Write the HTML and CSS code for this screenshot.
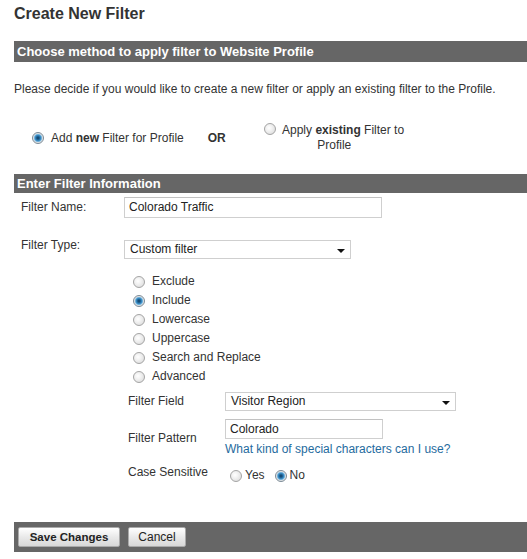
FILE: index.html
```
<!DOCTYPE html>
<html>
<head>
<meta charset="utf-8">
<link rel="stylesheet" href="styles.css">
</head>
<body>
<div class="page">
  <h1 class="title">Create New Filter</h1>
  <div class="bar bar-method">Choose method to apply filter to Website Profile</div>
  <p class="intro">Please decide if you would like to create a new filter or apply an existing filter to the Profile.</p>
  <div class="method">
    <label class="opt opt-new"><span class="radio on"></span><span>Add <b>new</b> Filter for Profile</span></label>
    <span class="or">OR</span>
    <label class="opt opt-existing"><span class="radio"></span> <span>Apply <b>existing</b> Filter to</span><br><span>Profile</span></label>
  </div>
  <div class="bar bar-info">Enter Filter Information</div>
  <div class="form">
    <div class="row row-name">
      <span class="label">Filter Name:</span>
      <span class="input input-name">Colorado Traffic</span>
    </div>
    <div class="row row-type">
      <span class="label">Filter Type:</span>
      <div class="type-ctl">
        <div class="select select-type"><span>Custom filter</span><span class="caret"></span></div>
        <ul class="radio-list">
          <li><span class="radio"></span>Exclude</li>
          <li><span class="radio on"></span>Include</li>
          <li><span class="radio"></span>Lowercase</li>
          <li><span class="radio"></span>Uppercase</li>
          <li><span class="radio"></span>Search and Replace</li>
          <li><span class="radio"></span>Advanced</li>
        </ul>
        <div class="sub">
          <div class="sub-row sub-field">
            <span class="sub-label">Filter Field</span>
            <div class="select select-field"><span>Visitor Region</span><span class="caret"></span></div>
          </div>
          <div class="sub-row sub-pattern">
            <span class="sub-label">Filter Pattern</span>
            <div class="pattern-ctl">
              <span class="input input-pattern">Colorado</span>
              <a class="help" href="#">What kind of special characters can I use?</a>
            </div>
          </div>
          <div class="sub-row sub-case">
            <span class="sub-label">Case Sensitive</span>
            <div class="case-ctl">
              <span class="radio"></span><span class="case-text">Yes</span>
              <span class="radio on"></span><span class="case-text">No</span>
            </div>
          </div>
        </div>
      </div>
    </div>
  </div>
  <div class="footer">
    <button class="btn btn-save">Save Changes</button>
    <button class="btn btn-cancel">Cancel</button>
  </div>
</div>
</body>
</html>
```
FILE: styles.css
```
html, body {
  margin: 0;
  padding: 0;
  background: #fff;
}
body {
  font-family: "Liberation Sans", Arial, sans-serif;
  font-size: 12px;
  line-height: 15px;
  color: #333;
}
.page {
  padding-left: 14px;
}
.title {
  margin: 0;
  padding-top: 4px;
  font-size: 16px;
  line-height: 20px;
  font-weight: bold;
  color: #333;
}
.bar {
  background: #666;
  color: #fff;
  font-weight: bold;
  font-size: 13px;
  padding-left: 3px;
}
.bar-method {
  margin-top: 17px;
  height: 21px;
  line-height: 21px;
}
.intro {
  margin: 20px 0 0;
}
.method {
  display: flex;
  align-items: center;
  margin-top: 26px;
  padding-left: 18px;
}
.opt {
  display: flex;
  align-items: center;
}
.opt-new .radio {
  margin-right: 7px;
}
.or {
  font-weight: bold;
  margin-left: 24px;
}
.opt-existing {
  display: block;
  width: 145px;
  margin-left: 36px;
  text-align: center;
}
.opt-existing .radio {
  vertical-align: -1px;
  margin-right: 3px;
}
.radio {
  display: inline-block;
  box-sizing: border-box;
  width: 12px;
  height: 12px;
  border-radius: 50%;
  border: 1px solid #a4a4a4;
  background: radial-gradient(circle at 40% 40%, #ffffff 0, #f2f2f2 35%, #d6d6d6 100%);
  flex: none;
}
.radio.on {
  border-color: #7b8a96;
  background: radial-gradient(circle at 50% 50%, #0f3b5e 0, #1d5f90 1.5px, #3f93cb 3px, #9cc9e6 4px, #e6e6e6 4.6px, #f6f6f6 100%);
}
.bar-info {
  margin-top: 21px;
  height: 19px;
  line-height: 20px;
}
.form {
  padding-left: 7px;
}
.row {
  display: flex;
}
.label {
  width: 103px;
  flex: none;
}
.row-name {
  margin-top: 4px;
  align-items: center;
}
.input {
  display: block;
  box-sizing: border-box;
  border: 1px solid #cfcfcf;
  border-top-color: #c2c2c2;
  background: #fff;
  padding-left: 4px;
  color: #222;
}
.input-name {
  width: 258px;
  height: 21px;
  line-height: 19px;
}
.row-type {
  margin-top: 20px;
  align-items: flex-start;
}
.select {
  display: flex;
  justify-content: space-between;
  align-items: center;
  box-sizing: border-box;
  border: 1px solid #cfcfcf;
  background: #fff;
  padding: 0 5px 0 5px;
  color: #222;
}
.caret {
  width: 0;
  height: 0;
  border-left: 4px solid transparent;
  border-right: 4px solid transparent;
  border-top: 4px solid #111;
  margin-top: 2px;
}
.select-type {
  margin-top: 2px;
  width: 227px;
  height: 19px;
}
.radio-list {
  list-style: none;
  margin: 13px 0 0;
  padding: 0 0 0 9px;
}
.radio-list li {
  display: flex;
  align-items: center;
  height: 19px;
}
.radio-list .radio {
  margin-right: 7px;
}
.sub {
  padding-left: 4px;
  margin-top: 6px;
}
.sub-row {
  display: flex;
}
.sub-label {
  width: 97px;
  flex: none;
}
.sub-field {
  align-items: center;
}
.select-field {
  width: 231px;
  height: 19px;
}
.sub-pattern {
  margin-top: 8px;
  align-items: center;
}
.input-pattern {
  width: 158px;
  height: 20px;
  line-height: 18px;
}
.help {
  display: block;
  margin-top: 3px;
  color: #1f6b9e;
  text-decoration: none;
}
.sub-case {
  margin-top: 8px;
  align-items: flex-start;
}
.case-ctl {
  display: flex;
  align-items: center;
  margin-top: 3px;
  padding-left: 5px;
}
.case-text {
  margin-left: 3px;
  margin-right: 10px;
}
.footer {
  display: flex;
  gap: 8px;
  margin-top: 39px;
  background: #666;
  height: 30px;
  box-sizing: border-box;
  padding: 5px 0 0 4px;
}
.btn {
  height: 20px;
  box-sizing: border-box;
  border: 1px solid #aaa;
  border-radius: 2px;
  background: linear-gradient(#ffffff, #e9e9e9 50%, #d8d8d8);
  font-family: "Liberation Sans", Arial, sans-serif;
  font-size: 12px;
  color: #222;
  padding: 0;
  line-height: 18px;
}
.btn-save {
  width: 102px;
  font-weight: bold;
  font-size: 11.5px;
}
.btn-cancel {
  width: 58px;
}
```
